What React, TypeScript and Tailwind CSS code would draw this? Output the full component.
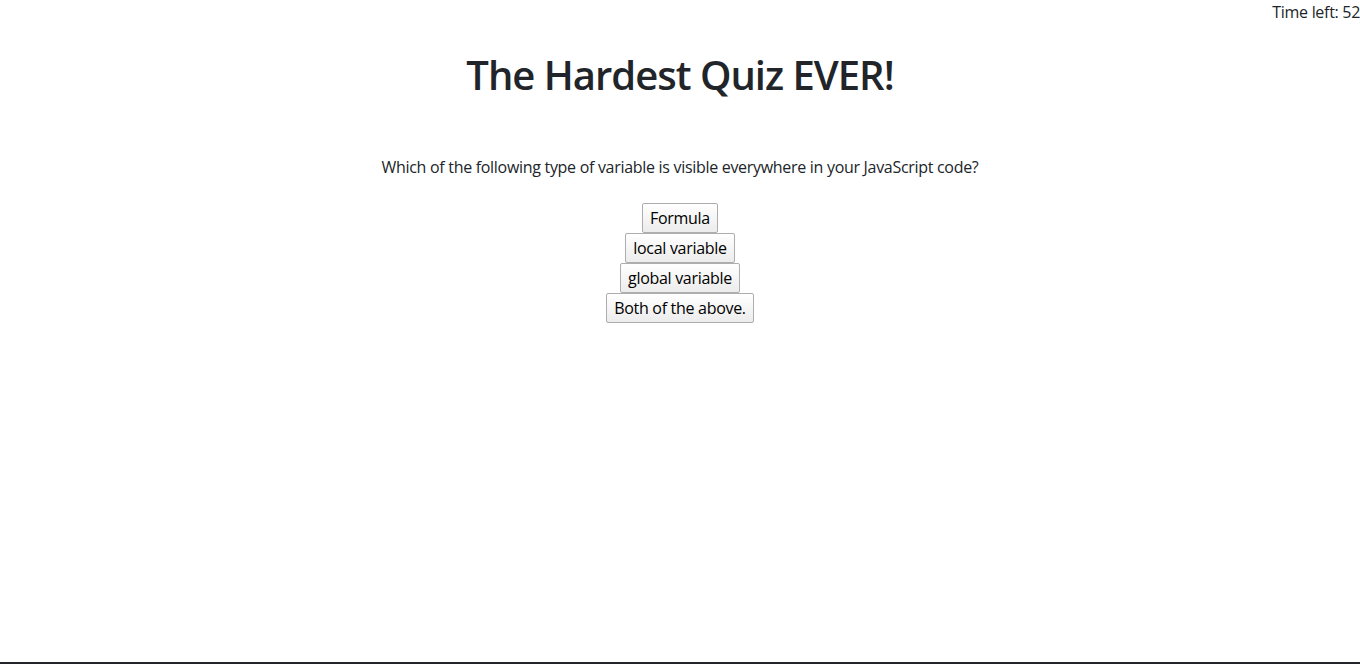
import React from "react";

const font = { fontFamily: '"Segoe UI", "Open Sans", "Noto Sans", sans-serif' };

const answers = ["Formula", "local variable", "global variable", "Both of the above."];

export default function App() {
  return (
    <div className="min-h-[664px] h-[664px] bg-white text-[#212529] flex flex-col border-b-2 border-[#212529]" style={font}>
      <div className="text-right text-[16px] leading-[24px] h-[24px] tracking-[-0.3px]">Time left: 52</div>
      <h1 className="mt-[27px] text-center text-[40px] leading-[48px] font-semibold tracking-[-1px]">The Hardest Quiz EVER!</h1>
      <p className="mt-[56px] text-center text-[16px] leading-[24px] tracking-[-0.3px]">
        Which of the following type of variable is visible everywhere in your JavaScript code?
      </p>
      <div className="mt-[24px] flex flex-col items-center">
        {answers.map((a) => (
          <button
            key={a}
            className="h-[30px] px-[7px] text-[16px] leading-[24px] tracking-[-0.3px] text-black border border-[#adadad] bg-gradient-to-b from-white to-[#ececec] rounded-[2px]"
          >
            {a}
          </button>
        ))}
      </div>
    </div>
  );
}
